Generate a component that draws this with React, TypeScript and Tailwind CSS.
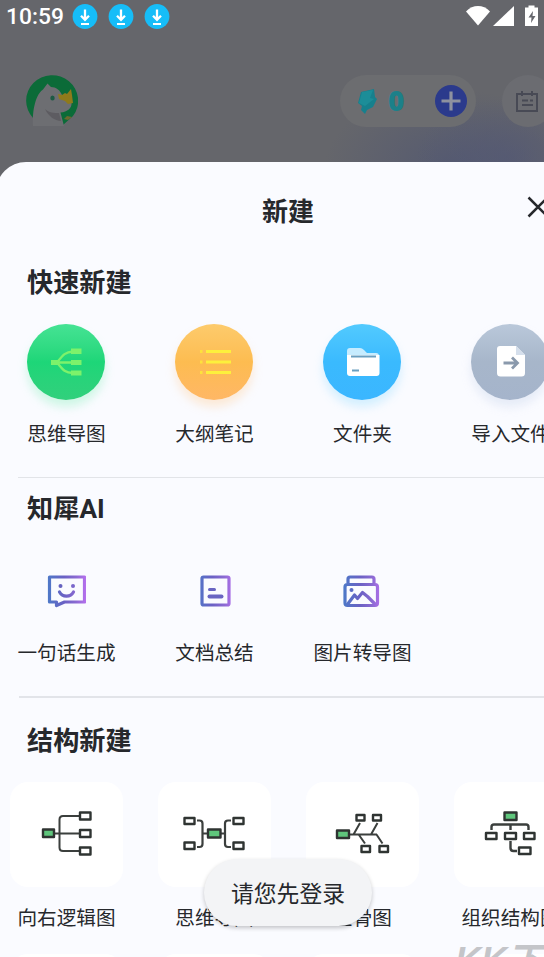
import type { ReactNode } from "react";

const DownloadBadge = () => (
  <svg viewBox="0 0 26 26" className="size-[26px]" fill="none">
    <circle cx="13" cy="12.500" r="12.4" fill="#16bdf8" />
    <path d="M13 5.500v10M9 11.800l4 4 4-4" stroke="#fff" strokeWidth="2.3" />
    <path d="M9 20h8" stroke="#fff" strokeWidth="2" />
  </svg>
);

const StatusBar = () => (
  <div className="flex h-[33px] items-center pl-[6px]">
    <span className="w-[66px] pt-[2px] font-[Roboto] text-[22.800px] font-medium text-white">
      10:59
    </span>
    <div className="flex gap-[10px]">
      <DownloadBadge />
      <DownloadBadge />
      <DownloadBadge />
    </div>
    <svg viewBox="0 0 74 22" className="mr-[4px] mb-[1px] ml-auto h-[22px] w-[74px]">
      <path d="M0 6.5C7-.8 17-.8 24 6.5L12 20.500z" fill="#fff" />
      <path d="M27 21L48 1v20z" fill="#fff" />
      <path d="M59 2.500h3.500V0.500h6v2H72v18.500H59z" fill="#fff" />
      <path d="M67 6l-4.500 6.500h3L65 18l4.500-7h-3z" fill="#66676d" />
    </svg>
  </div>
);

const Avatar = () => (
  <svg viewBox="0 0 54 52" className="h-[52px] w-[54px]">
    <path
      d="M9 43A26 25.500 0 1 1 49 41L39 50 26 30z"
      fill="#0b6b38"
    />
    <path
      d="M9 51C8 35 12 19 19 14.500L23.500 8.500 27 12C32 12 36 15 38 20l9.500 8c.5 5-4 9-11 9.500L40 51z"
      fill="#6d6e72"
    />
    <path d="M21 34c4 4 9 4 14 4l2 8c-6 0-13-5-16-12z" fill="#5d5c61" />
    <path d="M34 19l4 1 3-2 2 1 4-5 1 6 1 8-5 1-3-3-6-2z" fill="#8f7a1b" />
    <path d="M40 44l3-3 5 1-4 3z" fill="#6b6a2e" />
    <ellipse cx="28.500" cy="23" rx="2.200" ry="2.500" fill="#1d5a44" />
  </svg>
);

const TopBar = () => (
  <div className="flex h-[52px] items-center">
    <div className="ml-[24px]">
      <Avatar />
    </div>
    <div className="ml-[262px] flex h-[52px] w-[136px] shrink-0 items-center rounded-full bg-[#6c6d70] pl-[17px]">
      <svg viewBox="0 0 22 26" className="h-[26px] w-[22px]">
        <path
          d="M4 4L17 1l1 8 2 2-4 8-6 3-2 4-4-4 1-4-4-3z"
          fill="#16808d"
        />
        <path d="M5 4L16 2l-3 8 4 1-9 7-6-3z" fill="#1c8d98" />
      </svg>
      <span className="mb-[2px] ml-[9px] w-[18px] font-['Open_Sans'] text-[28px] leading-none font-extrabold text-[#1c8089]">
        0
      </span>
      <svg viewBox="0 0 32 32" className="mr-[9px] ml-auto size-[32px]">
        <circle cx="16" cy="16" r="16" fill="#2b3a8c" />
        <path d="M6.500 16h19M16 6.500v19" stroke="#8e919f" strokeWidth="3.200" />
      </svg>
    </div>
    <div className="ml-[26px] flex size-[52px] shrink-0 items-center rounded-full bg-[#6b6c71] pl-[13px]">
      <svg
        viewBox="0 0 24 22"
        className="h-[22px] w-[24px]"
        fill="none"
        stroke="#484a55"
        strokeWidth="2"
      >
        <path d="M2 4h20v17H2zM7 1v5M17 1v5M7 10.500h6M7 15h11M15 10.500h3" />
      </svg>
    </div>
  </div>
);

const MindMapIcon = () => (
  <svg viewBox="0 0 78 76" className="h-[76px] w-[78px]" fill="none">
    <path
      d="M30 38.500H44M30 38.500C36 31 38 28 46 27.500M30 38.500C36 46 38 49 46 49"
      stroke="#7df26b"
      strokeWidth="2.400"
    />
    <path
      d="M44 24.500h10.500v5.500H44zM44 36h10.500v5H44zM44 46.500h10.500v5H44zM24 36h8v5h-8z"
      fill="#7df26b"
    />
  </svg>
);

const OutlineIcon = () => (
  <svg viewBox="0 0 78 76" className="h-[76px] w-[78px]" fill="none">
    <path d="M31 27.500h25M31 38h25M31 48.500h25" stroke="#fdf03c" strokeWidth="3" />
    <path d="M25 27.500h2.500M25 38h2.500M25 48.500h2.500" stroke="#fde13c" strokeWidth="3" />
  </svg>
);

const FolderIcon = () => (
  <svg viewBox="0 0 78 76" className="h-[76px] w-[78px]" fill="none">
    <path d="M24 35V27q0-3 3-3h10q2 0 4 2l3 3h9q3 0 3 3v3z" fill="#c6ecff" />
    <path d="M24 31h32.500v18q0 3-3 3H27q-3 0-3-3z" fill="#fff" />
    <path d="M28 32.500h25M29 46.500h7" stroke="#6a9fc0" strokeWidth="2" />
  </svg>
);

const ImportIcon = () => (
  <svg viewBox="0 0 78 76" className="h-[76px] w-[78px]" fill="none">
    <path d="M29 22h16l9 9v18q0 3.500-3.500 3.500h-21Q26 52.500 26 49V25q0-3 3-3z" fill="#fff" />
    <path d="M45 22l9 9h-9z" fill="#d5dfec" />
    <path
      d="M32.500 39H46M41 33.500l5.500 5.500-5.500 5.500"
      stroke="#8a99ac"
      strokeWidth="2.800"
    />
  </svg>
);

const AiGradient = ({ id }: { id: string }) => (
  <linearGradient id={id} x1="0" y1="0" x2="40" y2="0" gradientUnits="userSpaceOnUse">
    <stop offset="0" stopColor="#4a7bc8" />
    <stop offset="0.450" stopColor="#6a61c4" />
    <stop offset="0.750" stopColor="#8a6ad2" />
    <stop offset="1" stopColor="#b670ee" />
  </linearGradient>
);

const ChatIcon = () => (
  <svg viewBox="0 0 40 34" className="h-[34px] w-[40px]" fill="none">
    <AiGradient id="chat" />
    <g stroke="url(#chat)" strokeWidth="3.200" strokeLinejoin="round">
      <path d="M3.500 3h35v25H18.500l-8 3.500V28h-7z" />
      <path d="M13.500 18c3 5.500 11 5.500 14 0" strokeLinecap="round" />
    </g>
    <circle cx="14.500" cy="12" r="2" fill="#6562c0" />
    <circle cx="27" cy="12" r="2" fill="#7a67cc" />
  </svg>
);

const DocIcon = () => (
  <svg viewBox="0 0 40 34" className="h-[34px] w-[40px]" fill="none">
    <AiGradient id="doc" />
    <g stroke="url(#doc)" strokeWidth="3.200">
      <rect x="8" y="3" width="27" height="28" rx="1.500" />
    </g>
    <path
      d="M15.500 15.500h5"
      stroke="#6965c2"
      strokeWidth="3"
      strokeLinecap="round"
    />
    <path
      d="M15.500 22.500h12"
      stroke="#6965c2"
      strokeWidth="4"
      strokeLinecap="round"
    />
  </svg>
);

const PictureIcon = () => (
  <svg viewBox="0 0 40 34" className="h-[34px] w-[40px]" fill="none">
    <AiGradient id="picture" />
    <g stroke="url(#picture)" strokeWidth="3.200" strokeLinejoin="round">
      <path d="M6 9V5q0-2 2-2h22q2 0 2 2v4" />
      <rect x="3" y="10.500" width="32.500" height="21" rx="2.500" />
      <path d="M5 31l7.500-10 3 3.500 5-6 5 4 8.500 8.500" />
    </g>
    <circle cx="9.500" cy="16" r="2" fill="#5c6cc4" />
  </svg>
);

const box = { stroke: "#2f3432", strokeWidth: 2.4, strokeLinejoin: "round" as const };

const RightLogicIcon = () => (
  <svg viewBox="0 0 113 105" className="h-[105px] w-[113px]" fill="none">
    <path
      d="M44 51.500H69M69 34H53q-3.500 0-3.500 3.500v28q0 3.500 3.500 3.500H69"
      stroke="#3b3f3d"
      strokeWidth="2"
    />
    <g {...box}>
      <rect x="33" y="47.500" width="11" height="7.500" fill="#5fc67c" />
      <rect x="70" y="30.500" width="10.500" height="7" />
      <rect x="70" y="48" width="10.500" height="7" />
      <rect x="70" y="65.500" width="10.500" height="7" />
    </g>
  </svg>
);

const MindStructureIcon = () => (
  <svg viewBox="0 0 113 105" className="h-[105px] w-[113px]" fill="none">
    <path
      d="M39 38.500h2.500q3 0 3 3V62q0 3-3 3H39M44.500 51.500H50M63 51.500h4M73 38.500h-3q-3 0-3 3V62q0 3 3 3h3"
      stroke="#3b3f3d"
      strokeWidth="2.200"
    />
    <g {...box}>
      <rect x="50" y="47.500" width="12.500" height="8" fill="#5fc67c" />
      <rect x="26.500" y="36" width="10" height="6" />
      <rect x="26.500" y="60.500" width="10" height="6.500" />
      <rect x="75.500" y="36" width="10" height="6" />
      <rect x="75.500" y="60.500" width="10" height="6.500" />
    </g>
  </svg>
);

const FishboneIcon = () => (
  <svg viewBox="0 0 113 105" className="h-[105px] w-[113px]" fill="none">
    <path
      d="M43 52.500H71M47.500 52.500L54 41M53 53l6 8.500M65 52.500L71.500 41M70.500 52.500l6 9"
      stroke="#3b3f3d"
      strokeWidth="2"
    />
    <g {...box}>
      <rect x="31" y="48.500" width="12" height="7.500" fill="#5fc67c" />
      <rect x="50.500" y="33" width="8" height="5.500" />
      <rect x="67" y="33" width="8" height="5.500" />
      <rect x="55.500" y="64" width="8.500" height="6" />
      <rect x="73.500" y="64" width="8.500" height="6" />
    </g>
  </svg>
);

const OrgIcon = () => (
  <svg viewBox="0 0 113 105" className="h-[105px] w-[113px]" fill="none">
    <path
      d="M37.500 48v-3q0-2.500 2.500-2.500h32q2.500 0 2.500 2.500v3M56.500 42.500V48M56.500 59v7q0 3 3 3H63"
      stroke="#3b3f3d"
      strokeWidth="2.400"
    />
    <g {...box}>
      <rect x="50.500" y="30.500" width="12" height="7.500" fill="#5fc67c" />
      <rect x="32" y="51" width="10.500" height="6" />
      <rect x="51" y="51" width="11" height="6" />
      <rect x="70" y="51" width="10.500" height="6" />
      <rect x="65" y="65.500" width="11.500" height="6.500" />
    </g>
  </svg>
);

const quickItems = [
  {
    label: "思维导图",
    icon: <MindMapIcon />,
    style: "from-[#45e394] via-[#1dd678] to-[#31d07c] shadow-[0_7px_10px_#8df0bd66]",
  },
  {
    label: "大纲笔记",
    icon: <OutlineIcon />,
    style: "from-[#fdcb6c] via-[#fdbc50] to-[#ffb765] shadow-[0_7px_10px_#ffd09a66]",
  },
  {
    label: "文件夹",
    icon: <FolderIcon />,
    style: "from-[#52cafe] via-[#3abafe] to-[#3bb6ff] shadow-[0_7px_10px_#9adfff66]",
  },
  {
    label: "导入文件",
    icon: <ImportIcon />,
    style: "from-[#bac8da] via-[#a7b6ca] to-[#a5b4cb] shadow-[0_7px_10px_#c9d5ea66]",
  },
];

const aiItems = [
  { label: "一句话生成", icon: <ChatIcon /> },
  { label: "文档总结", icon: <DocIcon /> },
  { label: "图片转导图", icon: <PictureIcon /> },
];

const structureItems = [
  { label: "向右逻辑图", icon: <RightLogicIcon /> },
  { label: "思维导图", icon: <MindStructureIcon /> },
  { label: "鱼骨图", icon: <FishboneIcon /> },
  { label: "组织结构图", icon: <OrgIcon /> },
];

const SectionTitle = ({ children }: { children: ReactNode }) => (
  <h2 className="ml-[27px] h-[36px] text-[26.200px] leading-[37px] font-bold">
    {children}
  </h2>
);

const Label = ({ children }: { children: ReactNode }) => (
  <span className="h-[28px] pt-px text-[19.600px] leading-[28px] whitespace-nowrap">
    {children}
  </span>
);

// four fixed columns, the last one runs off the right edge
const Row = ({ children }: { children: ReactNode }) => (
  <div className="-ml-[7.500px] grid w-[592px] grid-cols-4">{children}</div>
);

const App = () => {
  return (
    <div className="relative h-[957px] w-[544px] overflow-hidden bg-[#65666b] font-['Liberation_Sans','Noto_Sans_CJK_SC',sans-serif] text-[#26282c]">
      <div className="flex h-[162px] flex-col gap-[42px] bg-[radial-gradient(ellipse_90px_60px_at_506px_158px,#52577599,transparent),radial-gradient(ellipse_130px_75px_at_455px_165px,#555a70,transparent)]">
        <StatusBar />
        <TopBar />
      </div>

      <div className="-ml-[4px] h-[795px] w-[600px] rounded-tl-[30px] bg-[#fafbff] pl-[4px]">
        <div className="flex h-[103px] items-center pb-[5px] pl-[262px]">
          <h1 className="pt-[2px] text-[26px] leading-none font-bold">新建</h1>
          <svg
            viewBox="0 0 22 22"
            className="mb-[8px] ml-[213px] size-[22px]"
            stroke="#26282c"
            strokeWidth="2.500"
          >
            <path d="M1.500 1.500l19 19M20.500 1.500l-19 19" />
          </svg>
        </div>

        <SectionTitle>快速新建</SectionTitle>
        <div className="mt-[23px] h-[153px]">
          <Row>
            {quickItems.map((item) => (
              <div key={item.label} className="flex flex-col items-center">
                <div
                  className={`-ml-px h-[76px] w-[78px] rounded-[50%] bg-linear-to-b ${item.style}`}
                >
                  {item.icon}
                </div>
                <div className="mt-[19px] flex">
                  <Label>{item.label}</Label>
                </div>
              </div>
            ))}
          </Row>
        </div>

        <div className="ml-[18px] h-px bg-[#e2e4e8]" />
        <div className="mt-[13px]">
          <SectionTitle>
            知犀<span className="font-[Roboto]">AI</span>
          </SectionTitle>
        </div>
        <div className="mt-[47px] h-[122px]">
          <Row>
            {aiItems.map((item) => (
              <div key={item.label} className="flex flex-col items-center gap-[30px]">
                <div className="-ml-px">{item.icon}</div>
                <Label>{item.label}</Label>
              </div>
            ))}
          </Row>
        </div>

        <div className="ml-[19px] h-[2px] bg-[#e2e4e9]" />
        <div className="mt-[25px]">
          <SectionTitle>结构新建</SectionTitle>
        </div>
        <div className="mt-[23px] h-[172px]">
          <Row>
            {structureItems.map((item) => (
              <div key={item.label} className="flex flex-col items-center gap-[16px]">
                <div className="h-[105px] w-[113px] rounded-[18px] bg-white">
                  {item.icon}
                </div>
                <Label>{item.label}</Label>
              </div>
            ))}
          </Row>
        </div>
        <Row>
          {structureItems.map((item) => (
            <div
              key={item.label}
              className="h-[105px] w-[113px] justify-self-center rounded-[18px] bg-white"
            />
          ))}
        </Row>
      </div>

      <div className="absolute top-[859px] left-[204px] flex h-[67px] w-[168px] items-center justify-center rounded-full bg-[#f3f4f6] pt-[3px] text-[22.800px] shadow-[0_2px_4px_#00000038]">
        请您先登录
      </div>
      <div className="absolute top-[941px] left-[455px] text-[36px] leading-[40px] font-bold whitespace-nowrap text-[#c4c5c9] italic">
        KK下载
      </div>
    </div>
  );
};

export default App;
